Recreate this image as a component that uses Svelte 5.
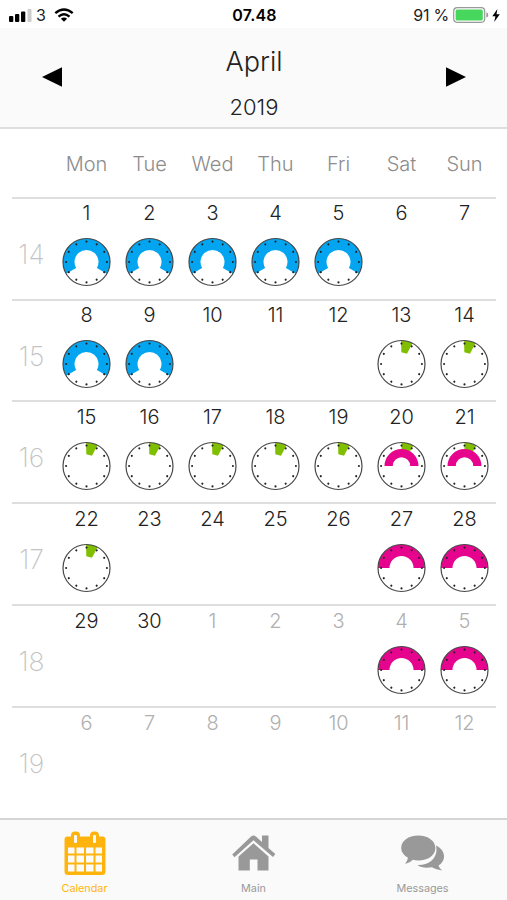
<script lang="ts">
  type Kind = "day" | "night" | "short" | "split";

  interface Arc {
    from: number;
    to: number;
    inner: number;
    outer: number;
    color: string;
  }

  const weekdays = ["Mon", "Tue", "Wed", "Thu", "Fri", "Sat", "Sun"];
  const ticks = Array.from({ length: 12 }, (_, i) => i * 30);

  // angles are degrees clockwise from twelve o'clock
  const arcs: Record<Kind, Arc[]> = {
    day: [{ from: -120, to: 120, inner: 12, outer: 23.5, color: "#03a5f0" }],
    night: [{ from: -90, to: 90, inner: 12, outer: 23.5, color: "#e6048e" }],
    short: [{ from: -1, to: 28, inner: 11.7, outer: 23.5, color: "#80bf00" }],
    split: [
      { from: 0, to: 30, inner: 16, outer: 23.5, color: "#80bf00" },
      { from: -90, to: 90, inner: 8.7, outer: 17, color: "#e6048e" },
    ],
  };

  const shifts: Record<number, Kind> = {
    1: "day", 2: "day", 3: "day", 4: "day", 5: "day", 8: "day", 9: "day",
    13: "short", 14: "short", 15: "short", 16: "short", 17: "short",
    18: "short", 19: "short", 20: "split", 21: "split", 22: "short",
    27: "night", 28: "night", 34: "night", 35: "night",
  };

  const weeks = Array.from({ length: 6 }, (_, w) => ({
    number: 14 + w,
    days: Array.from({ length: 7 }, (_, d) => {
      const n = w * 7 + d + 1;
      return { label: n > 30 ? n - 30 : n, other: n > 30, kind: shifts[n] };
    }),
  }));

  function point(angle: number, r: number) {
    const rad = (angle * Math.PI) / 180;
    return `${(r * Math.sin(rad)).toFixed(2)} ${(-r * Math.cos(rad)).toFixed(2)}`;
  }

  function arcPath({ from, to, inner, outer }: Arc) {
    const large = to - from > 180 ? 1 : 0;
    // thin slices end in a straight inner edge
    const back =
      to - from < 30
        ? `L${point(from, inner)}`
        : `A${inner} ${inner} 0 ${large} 0 ${point(from, inner)}`;
    return `M${point(from, outer)}A${outer} ${outer} 0 ${large} 1 ${point(to, outer)}L${point(to, inner)}${back}Z`;
  }
</script>

{#snippet clock(kind: Kind)}
  <svg class="clock" viewBox="-25.5 -25 51 50">
    <circle r="23.5" fill="#fff" />
    {#each arcs[kind] as arc}
      <path d={arcPath(arc)} fill={arc.color} />
    {/each}
    <circle r="23.5" fill="none" stroke="#484848" stroke-width="1.2" />
    {#each ticks as angle}
      <circle cy="-20.4" r="1.05" fill="#222" transform="rotate({angle})" />
    {/each}
  </svg>
{/snippet}

<div class="screen">
  <div class="status">
    <div class="status-left">
      <svg width="23" height="13" viewBox="0 0 23 13">
        <rect x="0" y="7" width="4.3" height="6" rx="1" />
        <rect x="6" y="5" width="4.3" height="8" rx="1" />
        <rect x="12" y="2.5" width="4.3" height="10.5" rx="1" />
        <rect x="18.5" y="0" width="4" height="13" rx="1" fill="#ccc" />
      </svg>
      <span class="carrier">3</span>
      <svg width="20" height="14" viewBox="0 0 20 14">
        <g fill="none" stroke="#000" stroke-width="2.4">
          <path d="M1.3 5.1Q10-2.3 18.7 5.1" />
          <path d="M4.5 8.7Q10 4 15.5 8.7" />
        </g>
        <path d="M6.9 10.7Q10 8.1 13.1 10.7L10 13.8Z" />
      </svg>
    </div>
    <span class="time">07.48</span>
    <div class="status-right">
      <span>91 %</span>
      <svg width="36" height="16" viewBox="0 0 36 16">
        <rect x="0.7" y="0.7" width="31" height="14.6" rx="3.5" fill="#fff" stroke="#999" stroke-width="1.2" />
        <rect x="2.6" y="2.6" width="27.2" height="10.8" rx="1.5" fill="#48d75d" />
        <path d="M33.3 5.2Q35.3 6 35.3 8T33.3 10.8Z" fill="#999" />
      </svg>
      <svg class="bolt" width="8" height="13" viewBox="0 0 8 13">
        <path d="M5.4 0L0.3 7.3H3.4L2.2 13L7.8 5.2H4.5Z" />
      </svg>
    </div>
  </div>

  <header>
    <button class="arrow" aria-label="Previous month">
      <svg width="20" height="20" viewBox="0 0 20 20"><path d="M0 10L20 0.3V19.7Z" /></svg>
    </button>
    <div class="title">
      <div class="month">April</div>
      <div class="year">2019</div>
    </div>
    <button class="arrow" aria-label="Next month">
      <svg width="20" height="20" viewBox="0 0 20 20"><path d="M20 10L0 0.3V19.7Z" /></svg>
    </button>
  </header>

  <main>
    <div class="row weekdays">
      <span></span>
      {#each weekdays as name}
        <span>{name}</span>
      {/each}
    </div>
    {#each weeks as week}
      <div class="row week">
        <div class="week-number">{week.number}</div>
        {#each week.days as day}
          <div class="day" class:other={day.other}>
            <span>{day.label}</span>
            {#if day.kind}
              {@render clock(day.kind)}
            {/if}
          </div>
        {/each}
      </div>
    {/each}
  </main>

  <nav>
    <div class="tab active">
      <svg width="46" height="46" viewBox="0 0 46 46">
        <path
          fill-rule="evenodd"
          d="M5.5 6.5H40.5Q43.5 6.5 43.5 9.5V41.5Q43.5 45 40 45H6Q2.5 45 2.5 41.5V9.5Q2.5 6.5 5.5 6.5ZM6 17.5V23.5H12.5V17.5ZM14.5 17.5V23.5H22V17.5ZM24 17.5V23.5H31.5V17.5ZM33.5 17.5V23.5H40V17.5ZM6 25.5V32.5H12.5V25.5ZM14.5 25.5V32.5H22V25.5ZM24 25.5V32.5H31.5V25.5ZM33.5 25.5V32.5H40V25.5ZM6 34.5V41.5H12.5V34.5ZM14.5 34.5V41.5H22V34.5ZM24 34.5V41.5H31.5V34.5ZM33.5 34.5V41.5H40V34.5Z"
        />
        <rect x="9" y="1.5" width="9" height="13.5" rx="4" />
        <rect x="28" y="1.5" width="9" height="13.5" rx="4" />
        <rect x="12" y="5" width="3" height="8" rx="1" fill="#fafafa" />
        <rect x="31" y="5" width="3" height="8" rx="1" fill="#fafafa" />
      </svg>
      <span>Calendar</span>
    </div>
    <div class="tab">
      <svg width="46" height="46" viewBox="0 0 46 46">
        <path d="M1.2 24.5L19.8 6.7Q22.5 4.5 25.2 6.7L31 12V5.5H37.5V18L44.3 24L42 27L22.5 10.2L3.5 27.2Z" />
        <path d="M7.5 26.5L22.5 13.2L37.5 26.5V40.5H26.5V29.5H18.8V40.5H7.5Z" />
      </svg>
      <span>Main</span>
    </div>
    <div class="tab">
      <svg width="46" height="46" viewBox="0 0 46 46">
        <path d="M36 15.5C46 20 46.5 31 38.5 35.5Q39 38 42.2 40.4Q36 40 32 37.2C26 38.3 20.5 37.5 17.5 35C29 35.5 39 27.5 36 15.5Z" />
        <path d="M18.2 5.5C28.2 5.5 35.4 11 35.4 18S28.2 30.5 18.2 30.5Q15.2 30.5 12.7 29.8Q9.2 33.5 5 33.7Q7.5 31 8 27.8Q1.2 24 1.2 18C1.2 11 8.2 5.5 18.2 5.5Z" />
      </svg>
      <span>Messages</span>
    </div>
  </nav>
</div>

<style>
  :global(body) {
    margin: 0;
  }

  .screen {
    display: flex;
    flex-direction: column;
    width: 507px;
    height: 900px;
    overflow: hidden;
    background: #fff;
    color: #222;
    font-family: Inter, "Liberation Sans", sans-serif;
  }

  .status {
    display: grid;
    grid-template-columns: 1fr auto 1fr;
    align-items: center;
    box-sizing: border-box;
    height: 28px;
    padding: 2px 7px 0 9px;
    font-size: 16px;
    letter-spacing: -0.2px;
  }

  .status-left,
  .status-right {
    display: flex;
    align-items: center;
  }

  .carrier {
    margin: 0 8px 0 4px;
  }

  .time {
    color: #000;
    font-weight: 600;
    letter-spacing: 0.2px;
  }

  .status-right {
    justify-content: flex-end;
    gap: 4px;
  }

  .bolt {
    margin-left: -1px;
  }

  header {
    display: flex;
    justify-content: space-between;
    align-items: center;
    box-sizing: border-box;
    height: 101px;
    padding: 0 41px 0 42px;
    background: #fafafa;
    border-bottom: 2px solid #dedede;
  }

  .arrow {
    display: flex;
    margin-top: -2px;
    padding: 0;
    border: 0;
    background: none;
  }

  .title {
    padding-top: 14px;
    text-align: center;
  }

  .month {
    font-size: 27px;
    font-weight: 300;
    line-height: 46px;
  }

  .year {
    font-size: 22px;
    font-weight: 300;
    line-height: 45px;
  }

  main {
    flex: 1;
    padding: 0 11px 0 12px;
  }

  .row {
    display: grid;
    grid-template-columns: 43px repeat(7, 63px);
  }

  .weekdays {
    height: 67.7px;
    color: #8c8c8c;
    font-size: 20px;
    font-weight: 300;
    line-height: 70px;
    text-align: center;
  }

  .week {
    box-sizing: border-box;
    height: 101.85px;
    border-top: 2px solid #dedede;
  }

  .week-number {
    padding: 41px 4px 0 0;
    color: #c4c4c4;
    font-size: 26.5px;
    font-weight: 250;
    line-height: 28px;
    text-align: center;
  }

  .day {
    display: flex;
    flex-direction: column;
    align-items: center;
    padding-top: 1.6px;
    font-size: 20px;
    font-weight: 320;
    line-height: 26px;
  }

  .other {
    color: #b0b0b0;
  }

  .clock {
    width: 51px;
    height: 50px;
    margin-top: 11.2px;
  }

  nav {
    display: grid;
    grid-template-columns: repeat(3, 1fr);
    box-sizing: border-box;
    height: 82px;
    padding-top: 10px;
    background: #fafafa;
    border-top: 2px solid #d5d5d5;
  }

  .tab {
    display: flex;
    flex-direction: column;
    align-items: center;
    color: #999;
    fill: #999;
    font-size: 10.8px;
    line-height: 25px;
  }

  .active {
    color: #ffb40d;
    fill: #ffb40d;
  }
</style>
